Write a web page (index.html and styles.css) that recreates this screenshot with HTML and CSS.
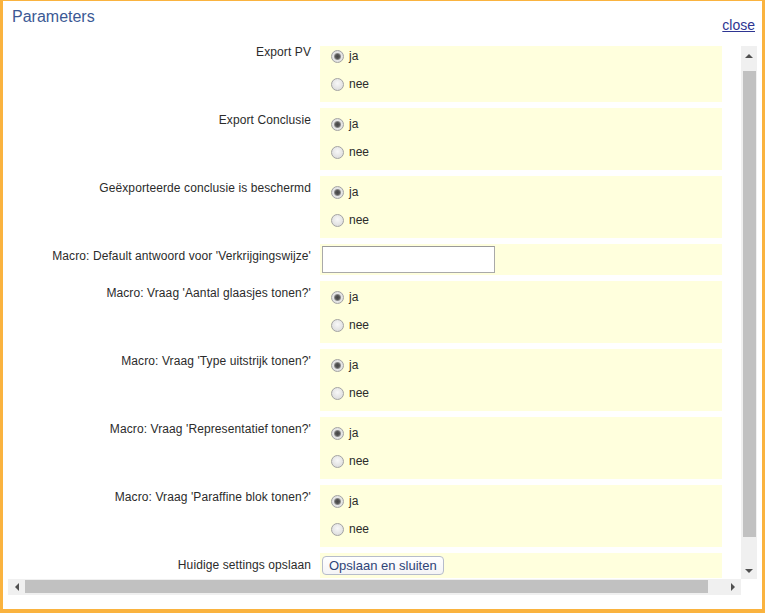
FILE: index.html
```html
<!DOCTYPE html>
<html>
<head>
<meta charset="utf-8">
<link rel="stylesheet" href="styles.css">
</head>
<body>
<div class="dialog">
  <div class="header">
    <div class="title">Parameters</div>
    <a class="close" href="#">close</a>
  </div>
  <div class="scrollarea">
    <div class="viewport">
      <div class="form">
        <div class="label">Export PV</div>
        <div class="value radios">
          <label class="opt"><input type="radio" name="r1" checked><span>ja</span></label>
          <label class="opt"><input type="radio" name="r1"><span>nee</span></label>
        </div>

        <div class="label">Export Conclusie</div>
        <div class="value radios">
          <label class="opt"><input type="radio" name="r2" checked><span>ja</span></label>
          <label class="opt"><input type="radio" name="r2"><span>nee</span></label>
        </div>

        <div class="label">Geëxporteerde conclusie is beschermd</div>
        <div class="value radios">
          <label class="opt"><input type="radio" name="r3" checked><span>ja</span></label>
          <label class="opt"><input type="radio" name="r3"><span>nee</span></label>
        </div>

        <div class="label">Macro: Default antwoord voor 'Verkrijgingswijze'</div>
        <div class="value textcell">
          <input class="text" type="text">
        </div>

        <div class="label">Macro: Vraag 'Aantal glaasjes tonen?'</div>
        <div class="value radios">
          <label class="opt"><input type="radio" name="r5" checked><span>ja</span></label>
          <label class="opt"><input type="radio" name="r5"><span>nee</span></label>
        </div>

        <div class="label">Macro: Vraag 'Type uitstrijk tonen?'</div>
        <div class="value radios">
          <label class="opt"><input type="radio" name="r6" checked><span>ja</span></label>
          <label class="opt"><input type="radio" name="r6"><span>nee</span></label>
        </div>

        <div class="label">Macro: Vraag 'Representatief tonen?'</div>
        <div class="value radios">
          <label class="opt"><input type="radio" name="r7" checked><span>ja</span></label>
          <label class="opt"><input type="radio" name="r7"><span>nee</span></label>
        </div>

        <div class="label">Macro: Vraag 'Paraffine blok tonen?'</div>
        <div class="value radios">
          <label class="opt"><input type="radio" name="r8" checked><span>ja</span></label>
          <label class="opt"><input type="radio" name="r8"><span>nee</span></label>
        </div>

        <div class="label">Huidige settings opslaan</div>
        <div class="value buttoncell">
          <button class="btn" type="button">Opslaan en sluiten</button>
        </div>
      </div>
    </div>
    <div class="vbar">
      <div class="sbtn"><span class="tri up"></span></div>
      <div class="vtrack"><div class="vthumb"></div></div>
      <div class="sbtn down"><span class="tri dn"></span></div>
    </div>
  </div>
  <div class="hrow">
    <div class="hbar">
      <div class="hbtn"><span class="tri lf"></span></div>
      <div class="htrack"><div class="hthumb"></div></div>
      <div class="hbtn right"><span class="tri rt"></span></div>
    </div>
    <div class="corner"></div>
  </div>
</div>
</body>
</html>
```

FILE: styles.css
```css
html, body {
  margin: 0;
  padding: 0;
  background: #ffffff;
}

.dialog {
  box-sizing: border-box;
  width: 765px;
  height: 613px;
  border-style: solid;
  border-color: #fab33f;
  border-width: 1px 3px 4px 3px;
  background: #ffffff;
  display: flex;
  flex-direction: column;
  font-family: "Liberation Sans", Arial, sans-serif;
  color: #333333;
}

.header {
  height: 45px;
  flex: none;
  box-sizing: border-box;
  display: flex;
  justify-content: space-between;
  align-items: flex-start;
  padding: 7px 7px 0 9px;
}

.title {
  font-size: 16px;
  line-height: 18px;
  color: #3b5994;
}

.close {
  font-size: 14px;
  line-height: 16px;
  margin-top: 9px;
  color: #2e3592;
  text-decoration: underline;
}

.scrollarea {
  height: 533px;
  flex: none;
  display: flex;
  padding: 0 5px;
}

.viewport {
  flex: 1;
  overflow: hidden;
  min-width: 0;
}

.form {
  margin-top: -6px;
  display: grid;
  grid-template-columns: 308px 402px;
  column-gap: 4px;
  row-gap: 6px;
  font-size: 12px;
}

.label {
  text-align: right;
  padding: 5px 5px 0 0;
  line-height: 15px;
  color: #2b2b2b;
  letter-spacing: 0.1px;
  white-space: nowrap;
}

.value {
  background: #ffffdd;
}

.radios {
  padding: 2px 0 4px 11px;
}

.opt {
  display: flex;
  align-items: center;
  height: 28px;
  line-height: 15px;
  color: #2b2b2b;
}

.opt span {
  padding-top: 1px;
}

.opt input {
  -webkit-appearance: none;
  appearance: none;
  width: 13px;
  height: 13px;
  margin: 0 5px 0 0;
  border-radius: 50%;
  border: 1px solid #a3a3a3;
  box-sizing: border-box;
  background: radial-gradient(circle at 50% 40%, #f8f8f8 0, #e4e4e4 60%, #d4d4d4 100%);
}

.opt input:checked {
  background: radial-gradient(circle at 50% 50%, #454545 0, #555555 2px, #8a8a8a 3px, #e6e6e6 4px, #d8d8d8 100%);
}

.textcell {
  padding: 2px 2px;
}

.text {
  display: block;
  box-sizing: border-box;
  width: 173px;
  height: 27px;
  margin: 0;
  border: 1px solid #a9a9a9;
  border-top-color: #9a9a9a;
  background: #ffffff;
}

.buttoncell {
  padding: 3px 2px;
}

.btn {
  display: block;
  box-sizing: border-box;
  height: 19px;
  margin: 0;
  padding: 0 6px;
  font-family: "Liberation Sans", Arial, sans-serif;
  font-size: 13px;
  line-height: 17px;
  color: #2f4478;
  background: linear-gradient(#ffffff, #f4f4f6);
  border: 1px solid #b6bccb;
  border-radius: 4px;
}

/* scrollbars */
.vbar {
  width: 16px;
  flex: none;
  background: #f0f0f0;
  display: flex;
  flex-direction: column;
}

.sbtn {
  height: 17px;
  flex: none;
  display: flex;
  align-items: center;
  justify-content: center;
  padding-top: 2px;
  box-sizing: border-box;
}

.sbtn.down {
  height: 16px;
  padding-top: 0;
}

.vtrack {
  flex: 1;
  padding-top: 8px;
}

.vthumb {
  margin: 0 1px 0 2px;
  height: 466px;
  background: #c1c1c1;
}

.hrow {
  height: 16px;
  flex: none;
  display: flex;
  padding: 0 5px;
  margin-bottom: 14px;
}

.hbar {
  flex: 1;
  display: flex;
  background: #f0f0f0;
}

.hbtn {
  width: 17px;
  flex: none;
  display: flex;
  align-items: center;
  justify-content: center;
}

.hbtn.right {
  width: 16px;
}

.htrack {
  flex: 1;
  padding: 1px 0 2px 0;
}

.hthumb {
  width: 683px;
  height: 100%;
  background: #c1c1c1;
}

.corner {
  width: 16px;
  flex: none;
  background: #ffffff;
}

.tri {
  width: 0;
  height: 0;
  border-style: solid;
  border-color: transparent;
}

.tri.up {
  border-width: 0 4px 4px 4px;
  border-bottom-color: #505050;
}

.tri.dn {
  border-width: 4px 4px 0 4px;
  border-top-color: #505050;
}

.tri.lf {
  border-width: 4px 4px 4px 0;
  border-right-color: #505050;
}

.tri.rt {
  border-width: 4px 0 4px 4px;
  border-left-color: #505050;
}
```
